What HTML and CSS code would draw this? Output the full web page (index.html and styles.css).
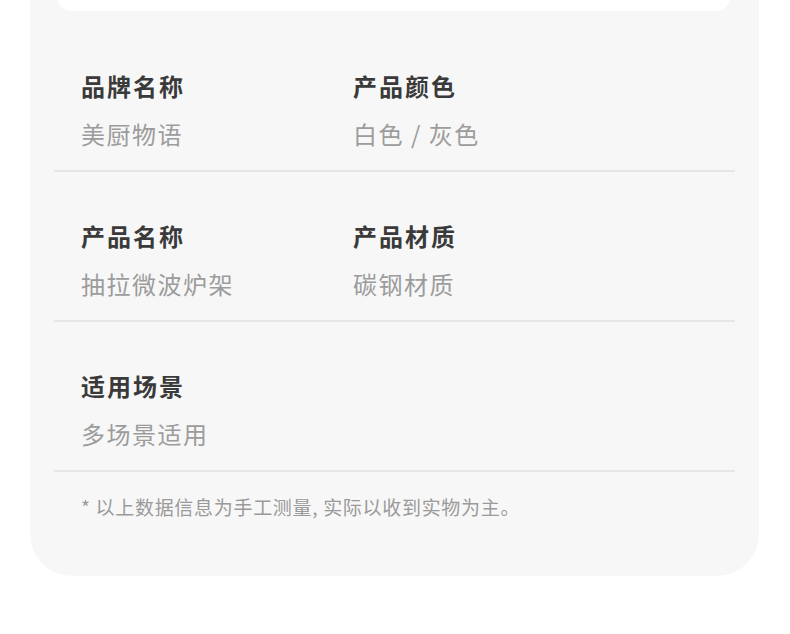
FILE: index.html
```html
<!DOCTYPE html>
<html lang="zh-CN">
<head>
<meta charset="utf-8">
<link rel="stylesheet" href="styles.css">
</head>
<body>
<div class="card">
  <div class="top-box"></div>
  <div class="row">
    <div class="cell">
      <div class="label">品牌名称</div>
      <div class="value">美厨物语</div>
    </div>
    <div class="cell">
      <div class="label">产品颜色</div>
      <div class="value">白色 / 灰色</div>
    </div>
  </div>
  <div class="row">
    <div class="cell">
      <div class="label">产品名称</div>
      <div class="value">抽拉微波炉架</div>
    </div>
    <div class="cell">
      <div class="label">产品材质</div>
      <div class="value">碳钢材质</div>
    </div>
  </div>
  <div class="row">
    <div class="cell">
      <div class="label">适用场景</div>
      <div class="value">多场景适用</div>
    </div>
  </div>
  <div class="note">* 以上数据信息为手工测量, 实际以收到实物为主。</div>
</div>
</body>
</html>
```
FILE: styles.css
```css
html, body {
  margin: 0;
  padding: 0;
  background: #ffffff;
}
body {
  font-family: "Noto Sans CJK SC", "Noto Sans", sans-serif;
  height: 634px;
  overflow: hidden;
}
.card {
  margin: -40px 31px 0 30px;
  background: #f7f7f7;
  border-radius: 0 0 42px 42px;
  padding: 0 24px 57px 24px;
}
.top-box {
  height: 51px;
  margin: 0 5px 0 3px;
  background: #ffffff;
  border-radius: 0 0 14px 14px;
}
.row {
  display: flex;
  padding: 48px 27px 20px 27px;
  border-bottom: 2px solid #e6e6e6;
}
.top-box + .row {
  padding-top: 59px;
}
.cell {
  width: 272px;
  display: flex;
  flex-direction: column;
  gap: 16px;
}
.label {
  font-size: 24px;
  line-height: 32px;
  font-weight: 700;
  color: #3a3a3a;
  letter-spacing: 2px;
}
.value {
  font-size: 24px;
  line-height: 32px;
  color: #9c9c9c;
  letter-spacing: 1.5px;
}
.note {
  margin-top: 23px;
  padding-left: 27px;
  font-size: 19px;
  line-height: 24px;
  color: #9a9a9a;
  letter-spacing: 0.7px;
}
```
